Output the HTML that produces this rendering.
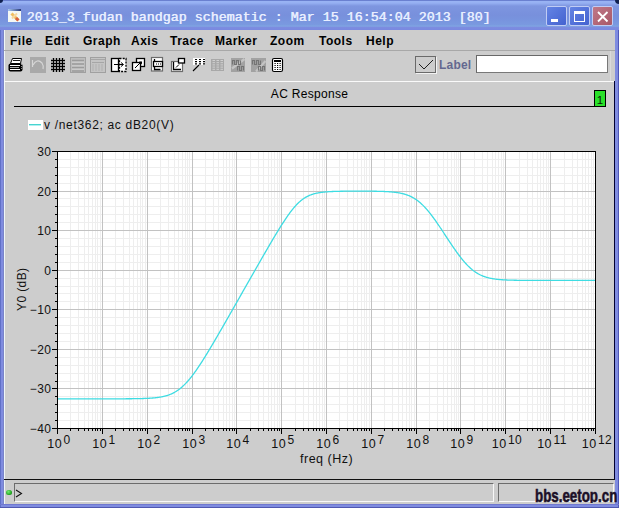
<!DOCTYPE html>
<html><head><meta charset="utf-8"><style>
*{margin:0;padding:0;box-sizing:border-box}
html,body{width:619px;height:508px;overflow:hidden;background:#7f8ce0}
body{position:relative;font-family:"Liberation Sans",sans-serif}
.abs{position:absolute}
#title{left:0;top:0;width:619px;height:30px;background:linear-gradient(#6a80d0 0px,#6a80d0 1px,#9ab4f4 1px,#96b0f2 3px,#7e96e0 6px,#7890dc 15px,#7894de 20px,#7a9ae0 25px,#80a6e2 26px,#7c8ce0 27.5px,#7a88e0 30px)}
#ttext{left:26.5px;top:10px;font-family:"Liberation Mono",monospace;text-shadow:0.5px 0 0 #e8eeff;font-size:13.33px;line-height:16px;color:#e8eeff;white-space:pre}
.tb{top:6px;width:21px;height:20px;border:1px solid #c0ccf4;border-radius:2px}
#client{left:4px;top:30px;width:611px;height:474px;background:#cdcdcd}
.menu{top:34px;font-size:12px;font-weight:bold;line-height:14px;color:#000;white-space:pre;letter-spacing:0.5px}
.yl{position:absolute;left:0;width:51.5px;text-align:right;font-size:12px;line-height:14px;color:#111;letter-spacing:0.5px}
.xl{position:absolute;top:437px;width:60px;text-align:center;font-size:12.5px;line-height:14px;color:#111;white-space:pre;letter-spacing:0.4px}
.xl sup{font-size:12px;vertical-align:0;position:relative;top:-4px;margin-left:1.5px}
</style></head><body>
<div id="title" class="abs"></div>
<div class="abs" style="left:0;top:30px;width:1px;height:478px;background:#6070c8"></div>
<div class="abs" style="left:3px;top:30px;width:1px;height:474px;background:#7a84c8"></div>
<div class="abs" style="left:618px;top:30px;width:1px;height:478px;background:#5058b8"></div>
<div class="abs" style="left:0;top:504px;width:619px;height:1px;background:#7078d0"></div>
<div class="abs" style="left:0;top:507px;width:619px;height:1px;background:#5058b0"></div>
<div class="abs" style="left:0;top:0;width:3px;height:3px;background:#102050;border-bottom-right-radius:3px"></div>
<div class="abs" style="left:615px;top:0;width:4px;height:4px;background:#102050;border-bottom-left-radius:4px"></div>
<!-- icon -->
<svg class="abs" style="left:8px;top:9px" width="14" height="14"><defs><linearGradient id="tg" x1="0" x2="1"><stop offset="0" stop-color="#a8c8f0"/><stop offset="1" stop-color="#2a3a7a"/></linearGradient></defs><rect x="0" y="0" width="13" height="13" fill="#f4f8f4"/><rect x="0" y="0" width="13" height="2" fill="url(#tg)"/><path d="M3.5 4.5L10 11" stroke="#f0b850" stroke-width="3" opacity="0.9"/><path d="M8 9L10.5 11.5" stroke="#d86040" stroke-width="3"/><path d="M9 4.5L4 9.5" stroke="#f8d8a0" stroke-width="2"/></svg>
<div id="ttext" class="abs">2013_3_fudan bandgap schematic : Mar 15 16:54:04 2013 [80]</div>
<div class="abs tb" style="left:546px;background:linear-gradient(135deg,#6484e4,#4462d0)"></div>
<div class="abs" style="left:551px;top:19px;width:7px;height:3px;background:#fff"></div>
<div class="abs tb" style="left:569px;background:linear-gradient(135deg,#6484e4,#4462d0)"></div>
<div class="abs" style="left:574px;top:11px;width:11px;height:11px;border:1px solid #fff;border-top-width:3px"></div>
<div class="abs tb" style="left:592px;background:linear-gradient(135deg,#c07888,#a85868)"></div>
<svg class="abs" style="left:596px;top:10px" width="13" height="13"><path d="M2 2L11.5 11.5M11.5 2L2 11.5" stroke="#fff" stroke-width="1.8"/></svg>
<div id="client" class="abs"></div>
<div class="abs" style="left:4px;top:30px;width:1px;height:474px;background:#eef6f8"></div>
<div class="abs" style="left:4px;top:50px;width:611px;height:1px;background:#a8a8a8"></div>
<div class="abs menu" style="left:10px">File</div>
<div class="abs menu" style="left:45px">Edit</div>
<div class="abs menu" style="left:83px">Graph</div>
<div class="abs menu" style="left:131px">Axis</div>
<div class="abs menu" style="left:170px">Trace</div>
<div class="abs menu" style="left:215px">Marker</div>
<div class="abs menu" style="left:270px">Zoom</div>
<div class="abs menu" style="left:319px">Tools</div>
<div class="abs menu" style="left:366px">Help</div>
<svg class="abs" style="left:0;top:0" width="619" height="80"><path d="M12.5 58.5H21.5L20.5 63.5H10.5Z" fill="#fff" stroke="#000"/>
<path d="M13 60.5H20" stroke="#000" stroke-width="0.9"/>
<rect x="8.5" y="63.5" width="14" height="8" rx="2" fill="#000"/>
<path d="M10 65.5H20M10 69.5H20" stroke="#fff"/>
<path d="M10 67.5H19" stroke="#a8a8a8"/>
<path d="M21 64.5h1M21 66.5h1M21 68.5h1" stroke="#888"/>
<rect x="30" y="57" width="16" height="16" fill="#a9a9a9"/>
<path d="M32.5 60V67M33 65Q37 58 42 63Q44 66 43 69" stroke="#d6d6d6" stroke-width="1.2" fill="none"/>
<rect x="52" y="59" width="12" height="12" fill="#fff"/><path d="M53.5 58V72M56.5 58V72M59.5 58V72M62.5 58V72M51 60.5H65M51 63.5H65M51 66.5H65M51 69.5H65" stroke="#000" stroke-width="1.4"/><path d="M50.5 58H51.5M50.5 72H51.5" stroke="#cdcdcd" stroke-width="0"/>
<rect x="70.5" y="57.5" width="15" height="15" fill="#bdbdbd" stroke="#a0a0a0"/>
<path d="M72 60.5H84M72 64H84M72 67.5H84M72 71H84" stroke="#9c9c9c" stroke-width="1.4"/>
<path d="M72 62.2H84M72 65.8H84M72 69.2H84" stroke="#cfcfcf" stroke-width="1"/>
<rect x="90.5" y="57.5" width="15" height="15" fill="#c4c4c4" stroke="#a0a0a0"/>
<path d="M91 59.5H105M92 62.5H104" stroke="#a6a6a6" stroke-width="1.2"/>
<path d="M93 64V71M96 64V71M99 64V71M102 64V71" stroke="#b0b0b0" stroke-width="1"/>
<rect x="111.5" y="58.5" width="7" height="13" fill="#fff" stroke="#000" stroke-width="1.3"/>
<rect x="119.5" y="58.5" width="6.5" height="13" fill="#fff" stroke="#000" stroke-width="1.3" stroke-dasharray="2 1.2"/>
<path d="M114 64.5H123M121 62.5L123.5 64.5L121 66.5" stroke="#000" stroke-width="1" fill="none"/>
<rect x="136.5" y="58.5" width="8" height="8" fill="#fff" stroke="#000" stroke-width="1.3"/>
<rect x="132.5" y="62.5" width="8" height="8" fill="#fff" stroke="#000" stroke-width="1.3"/>
<path d="M135 68L141 62" stroke="#000" stroke-width="1"/><path d="M139 61.5H142V64.5Z" fill="#000"/>
<rect x="151.5" y="57.5" width="11" height="13.5" fill="#fff" stroke="#6c6c6c" stroke-width="1.2"/>
<path d="M154.5 59V69.5H160.5" stroke="#000" stroke-width="1.3" fill="none"/>
<rect x="153.5" y="61.5" width="9" height="5" fill="#fff" stroke="#000" stroke-width="1.3"/>
<path d="M156 64H157M158 64H159M160 64H161" stroke="#000" stroke-width="1.2"/>
<rect x="171.5" y="61.5" width="11" height="10" fill="#fff" stroke="#6c6c6c" stroke-width="1.2"/>
<path d="M173.5 62V69.5H181" stroke="#000" stroke-width="1.3" fill="none"/>
<path d="M176 67.5L179 64.5" stroke="#000" stroke-width="1"/>
<rect x="178.5" y="58.5" width="6" height="4.5" fill="#fff" stroke="#000" stroke-width="1.3"/>
<rect x="193" y="58" width="12" height="7" fill="#fff"/>
<path d="M195 59.5h2M195 61.7h2M195 63.8h2M199 59.5h2M199 61.7h2M199 63.8h2M203 59.5h2M203 61.7h2M203 63.8h2" stroke="#000" stroke-width="1.2"/>
<path d="M199 65L193 71" stroke="#000" stroke-width="1.1"/>
<rect x="211" y="59" width="13" height="12" fill="#a8a8a8"/>
<path d="M212.5 60.5h2.5M212.5 62.7h2.5M212.5 64.9h2.5M212.5 67.1h2.5M212.5 69.3h2.5M216.5 60.5h2.5M216.5 62.7h2.5M216.5 64.9h2.5M216.5 67.1h2.5M216.5 69.3h2.5M220.5 60.5h2.5M220.5 62.7h2.5M220.5 64.9h2.5M220.5 67.1h2.5M220.5 69.3h2.5" stroke="#d0d0d0" stroke-width="1"/>
<rect x="231" y="58" width="14" height="14" fill="#a2a2a2"/>
<path d="M232 68.5L244.5 59" stroke="#c4c4c4" stroke-width="2.2"/>
<path d="M232.5 64.5V60.5H234.5V64.5H236.5V60.5H238.5V64.5H240.5V60.5" stroke="#747474" stroke-width="1.1" fill="none"/>
<path d="M237.5 70.5V66.5H239.5V70.5H241.5V66.5H243.5V70.5" stroke="#747474" stroke-width="1.1" fill="none"/>
<rect x="251" y="58" width="15" height="14" fill="#a2a2a2"/>
<path d="M256 71.5L265.5 61" stroke="#c4c4c4" stroke-width="2.2"/>
<path d="M252.5 64.5V60.5H254.5V64.5H256.5V60.5H258.5V64.5H260.5V60.5" stroke="#747474" stroke-width="1.1" fill="none"/>
<path d="M258.5 70.5V66.5H260.5V70.5H262.5V66.5H264.5V70.5" stroke="#747474" stroke-width="1.1" fill="none"/>
<rect x="272.5" y="58.5" width="10" height="13" rx="1.5" fill="#fff" stroke="#000" stroke-width="1.15"/>
<rect x="274" y="60" width="7" height="2" fill="#000"/>
<path d="M274.5 63.5h1.2M274.5 65.5h1.2M274.5 67.5h1.2M274.5 69.5h1.2M277 63.5h1.2M277 65.5h1.2M277 67.5h1.2M277 69.5h1.2M279.5 63.5h1.2M279.5 65.5h1.2M279.5 67.5h1.2M279.5 69.5h1.2" stroke="#000" stroke-width="1.2"/></svg>
<!-- label -->
<div class="abs" style="left:415px;top:56px;width:21px;height:17px;border:1px solid #6a6a6a;box-shadow:1px 1px 0 #f2f2f2"></div>
<svg class="abs" style="left:415px;top:56px" width="21" height="17"><path d="M4 8 L9 13 L18 4" stroke="#202020" stroke-width="1" fill="none"/></svg>
<div class="abs" style="left:439px;top:58px;font-size:12px;font-weight:bold;line-height:14px;color:#646890;letter-spacing:0.2px">Label</div>
<div class="abs" style="left:476px;top:55px;width:132px;height:18px;background:#fff;border:1px solid #686868;border-right-color:#787878;border-bottom-color:#787878"></div><div class="abs" style="left:610px;top:51px;width:1px;height:30px;background:#dadada"></div>
<!-- panel -->
<div class="abs" style="left:4px;top:81px;width:611px;height:1px;background:#fafafa"></div>
<div class="abs" style="left:614px;top:81px;width:1px;height:399px;background:#000030"></div>
<div class="abs" style="left:4px;top:479px;width:611px;height:1px;background:#101010"></div>
<div class="abs" style="left:0;top:87px;width:619px;text-align:center;font-size:12px;line-height:14px;color:#000;letter-spacing:0.3px">AC Response</div>
<div class="abs" style="left:14px;top:106px;width:580px;height:1px;background:#000"></div>
<div class="abs" style="left:594px;top:90px;width:12px;height:17px;background:#2ae02a;border:1px solid #000;font-size:11.5px;line-height:16px;padding-top:1px;text-align:center;color:#082008">1</div>
<!-- legend -->
<div class="abs" style="left:28px;top:120px;width:15px;height:10px;background:#fff"></div>
<div class="abs" style="left:29px;top:124px;width:12px;height:1px;background:#48d4d0"></div><div class="abs" style="left:29px;top:125px;width:12px;height:1px;background:#b0f0f0"></div>
<div class="abs" style="left:44px;top:118px;font-size:12px;line-height:14px;color:#111;white-space:pre;letter-spacing:0.68px">v /net362; ac dB20(V)</div>
<svg class="abs" style="left:0;top:0" width="619" height="508" shape-rendering="crispEdges">
<rect x="57.5" y="151.5" width="538" height="277" fill="#fff"/>
<path d="M70.5 152V428M78.5 152V428M84.5 152V428M88.5 152V428M92.5 152V428M95.5 152V428M97.5 152V428M100.5 152V428M115.5 152V428M123.5 152V428M129.5 152V428M133.5 152V428M137.5 152V428M140.5 152V428M142.5 152V428M145.5 152V428M160.5 152V428M168.5 152V428M174.5 152V428M178.5 152V428M182.5 152V428M185.5 152V428M187.5 152V428M189.5 152V428M205.5 152V428M213.5 152V428M218.5 152V428M223.5 152V428M226.5 152V428M229.5 152V428M232.5 152V428M234.5 152V428M250.5 152V428M258.5 152V428M263.5 152V428M268.5 152V428M271.5 152V428M274.5 152V428M277.5 152V428M279.5 152V428M295.5 152V428M303.5 152V428M308.5 152V428M313.5 152V428M316.5 152V428M319.5 152V428M322.5 152V428M324.5 152V428M339.5 152V428M347.5 152V428M353.5 152V428M357.5 152V428M361.5 152V428M364.5 152V428M366.5 152V428M369.5 152V428M384.5 152V428M392.5 152V428M398.5 152V428M402.5 152V428M406.5 152V428M409.5 152V428M411.5 152V428M414.5 152V428M429.5 152V428M437.5 152V428M443.5 152V428M447.5 152V428M451.5 152V428M454.5 152V428M456.5 152V428M458.5 152V428M474.5 152V428M482.5 152V428M487.5 152V428M492.5 152V428M495.5 152V428M498.5 152V428M501.5 152V428M503.5 152V428M519.5 152V428M527.5 152V428M532.5 152V428M537.5 152V428M540.5 152V428M543.5 152V428M546.5 152V428M548.5 152V428M564.5 152V428M572.5 152V428M577.5 152V428M582.5 152V428M585.5 152V428M588.5 152V428M591.5 152V428M593.5 152V428M58 420.5H595M58 412.5H595M58 404.5H595M58 396.5H595M58 381.5H595M58 373.5H595M58 365.5H595M58 357.5H595M58 341.5H595M58 333.5H595M58 325.5H595M58 317.5H595M58 301.5H595M58 293.5H595M58 286.5H595M58 278.5H595M58 262.5H595M58 254.5H595M58 246.5H595M58 238.5H595M58 222.5H595M58 214.5H595M58 206.5H595M58 198.5H595M58 183.5H595M58 175.5H595M58 167.5H595M58 159.5H595" stroke="#eeeeee" stroke-width="1" fill="none"/>
<path d="M102.5 152V428M147.5 152V428M192.5 152V428M236.5 152V428M281.5 152V428M326.5 152V428M371.5 152V428M416.5 152V428M460.5 152V428M505.5 152V428M550.5 152V428M58 388.5H595M58 349.5H595M58 309.5H595M58 270.5H595M58 230.5H595M58 191.5H595" stroke="#c2c2c2" stroke-width="1" fill="none"/>
<path d="M57.00 398.83 L57.50 398.83 L58.00 398.83 L58.50 398.83 L59.00 398.83 L59.50 398.83 L60.00 398.83 L60.50 398.83 L61.00 398.83 L61.50 398.83 L62.00 398.83 L62.50 398.83 L63.00 398.83 L63.50 398.83 L64.00 398.83 L64.50 398.83 L65.00 398.83 L65.50 398.83 L66.00 398.83 L66.50 398.83 L67.00 398.83 L67.50 398.83 L68.00 398.83 L68.50 398.83 L69.00 398.83 L69.50 398.83 L70.00 398.83 L70.50 398.83 L71.00 398.83 L71.50 398.83 L72.00 398.83 L72.50 398.83 L73.00 398.83 L73.50 398.83 L74.00 398.83 L74.50 398.83 L75.00 398.83 L75.50 398.83 L76.00 398.83 L76.50 398.83 L77.00 398.83 L77.50 398.83 L78.00 398.83 L78.50 398.83 L79.00 398.83 L79.50 398.83 L80.00 398.83 L80.50 398.83 L81.00 398.83 L81.50 398.83 L82.00 398.83 L82.50 398.83 L83.00 398.83 L83.50 398.83 L84.00 398.83 L84.50 398.83 L85.00 398.83 L85.50 398.83 L86.00 398.83 L86.50 398.83 L87.00 398.83 L87.50 398.83 L88.00 398.83 L88.50 398.83 L89.00 398.83 L89.50 398.83 L90.00 398.83 L90.50 398.83 L91.00 398.83 L91.50 398.83 L92.00 398.83 L92.50 398.83 L93.00 398.83 L93.50 398.83 L94.00 398.83 L94.50 398.83 L95.00 398.83 L95.50 398.83 L96.00 398.83 L96.50 398.83 L97.00 398.83 L97.50 398.83 L98.00 398.82 L98.50 398.82 L99.00 398.82 L99.50 398.82 L100.00 398.82 L100.50 398.82 L101.00 398.82 L101.50 398.82 L102.00 398.82 L102.50 398.82 L103.00 398.82 L103.50 398.82 L104.00 398.82 L104.50 398.82 L105.00 398.82 L105.50 398.82 L106.00 398.82 L106.50 398.82 L107.00 398.82 L107.50 398.82 L108.00 398.82 L108.50 398.82 L109.00 398.82 L109.50 398.82 L110.00 398.82 L110.50 398.82 L111.00 398.82 L111.50 398.82 L112.00 398.82 L112.50 398.81 L113.00 398.81 L113.50 398.81 L114.00 398.81 L114.50 398.81 L115.00 398.81 L115.50 398.81 L116.00 398.81 L116.50 398.81 L117.00 398.81 L117.50 398.81 L118.00 398.80 L118.50 398.80 L119.00 398.80 L119.50 398.80 L120.00 398.80 L120.50 398.80 L121.00 398.80 L121.50 398.79 L122.00 398.79 L122.50 398.79 L123.00 398.79 L123.50 398.79 L124.00 398.78 L124.50 398.78 L125.00 398.78 L125.50 398.78 L126.00 398.77 L126.50 398.77 L127.00 398.77 L127.50 398.76 L128.00 398.76 L128.50 398.76 L129.00 398.75 L129.50 398.75 L130.00 398.75 L130.50 398.74 L131.00 398.74 L131.50 398.73 L132.00 398.73 L132.50 398.72 L133.00 398.72 L133.50 398.71 L134.00 398.71 L134.50 398.70 L135.00 398.69 L135.50 398.68 L136.00 398.68 L136.50 398.67 L137.00 398.66 L137.50 398.65 L138.00 398.64 L138.50 398.63 L139.00 398.62 L139.50 398.61 L140.00 398.60 L140.50 398.59 L141.00 398.58 L141.50 398.56 L142.00 398.55 L142.50 398.54 L143.00 398.52 L143.50 398.50 L144.00 398.49 L144.50 398.47 L145.00 398.45 L145.50 398.43 L146.00 398.41 L146.50 398.39 L147.00 398.37 L147.50 398.34 L148.00 398.32 L148.50 398.29 L149.00 398.26 L149.50 398.23 L150.00 398.20 L150.50 398.17 L151.00 398.14 L151.50 398.10 L152.00 398.06 L152.50 398.02 L153.00 397.98 L153.50 397.94 L154.00 397.89 L154.50 397.85 L155.00 397.80 L155.50 397.74 L156.00 397.69 L156.50 397.63 L157.00 397.57 L157.50 397.50 L158.00 397.44 L158.50 397.37 L159.00 397.29 L159.50 397.22 L160.00 397.14 L160.50 397.05 L161.00 396.96 L161.50 396.87 L162.00 396.77 L162.50 396.67 L163.00 396.56 L163.50 396.45 L164.00 396.34 L164.50 396.21 L165.00 396.09 L165.50 395.95 L166.00 395.81 L166.50 395.67 L167.00 395.52 L167.50 395.36 L168.00 395.20 L168.50 395.02 L169.00 394.85 L169.50 394.66 L170.00 394.47 L170.50 394.26 L171.00 394.05 L171.50 393.84 L172.00 393.61 L172.50 393.37 L173.00 393.13 L173.50 392.87 L174.00 392.61 L174.50 392.34 L175.00 392.06 L175.50 391.76 L176.00 391.46 L176.50 391.15 L177.00 390.82 L177.50 390.49 L178.00 390.15 L178.50 389.79 L179.00 389.42 L179.50 389.05 L180.00 388.66 L180.50 388.26 L181.00 387.85 L181.50 387.42 L182.00 386.99 L182.50 386.55 L183.00 386.09 L183.50 385.62 L184.00 385.14 L184.50 384.65 L185.00 384.15 L185.50 383.64 L186.00 383.12 L186.50 382.58 L187.00 382.04 L187.50 381.48 L188.00 380.91 L188.50 380.34 L189.00 379.75 L189.50 379.15 L190.00 378.55 L190.50 377.93 L191.00 377.31 L191.50 376.67 L192.00 376.03 L192.50 375.37 L193.00 374.71 L193.50 374.04 L194.00 373.36 L194.50 372.68 L195.00 371.98 L195.50 371.28 L196.00 370.57 L196.50 369.86 L197.00 369.14 L197.50 368.41 L198.00 367.67 L198.50 366.93 L199.00 366.18 L199.50 365.43 L200.00 364.67 L200.50 363.91 L201.00 363.14 L201.50 362.36 L202.00 361.58 L202.50 360.80 L203.00 360.01 L203.50 359.22 L204.00 358.42 L204.50 357.62 L205.00 356.82 L205.50 356.01 L206.00 355.20 L206.50 354.38 L207.00 353.57 L207.50 352.75 L208.00 351.92 L208.50 351.10 L209.00 350.27 L209.50 349.44 L210.00 348.60 L210.50 347.77 L211.00 346.93 L211.50 346.09 L212.00 345.24 L212.50 344.40 L213.00 343.55 L213.50 342.70 L214.00 341.86 L214.50 341.00 L215.00 340.15 L215.50 339.30 L216.00 338.44 L216.50 337.58 L217.00 336.73 L217.50 335.87 L218.00 335.01 L218.50 334.15 L219.00 333.28 L219.50 332.42 L220.00 331.55 L220.50 330.69 L221.00 329.82 L221.50 328.96 L222.00 328.09 L222.50 327.22 L223.00 326.35 L223.50 325.48 L224.00 324.61 L224.50 323.74 L225.00 322.87 L225.50 322.00 L226.00 321.12 L226.50 320.25 L227.00 319.38 L227.50 318.50 L228.00 317.63 L228.50 316.76 L229.00 315.88 L229.50 315.01 L230.00 314.13 L230.50 313.25 L231.00 312.38 L231.50 311.50 L232.00 310.62 L232.50 309.75 L233.00 308.87 L233.50 307.99 L234.00 307.12 L234.50 306.24 L235.00 305.36 L235.50 304.48 L236.00 303.60 L236.50 302.72 L237.00 301.85 L237.50 300.97 L238.00 300.09 L238.50 299.21 L239.00 298.33 L239.50 297.45 L240.00 296.57 L240.50 295.69 L241.00 294.82 L241.50 293.94 L242.00 293.06 L242.50 292.18 L243.00 291.30 L243.50 290.42 L244.00 289.54 L244.50 288.66 L245.00 287.78 L245.50 286.90 L246.00 286.02 L246.50 285.15 L247.00 284.27 L247.50 283.39 L248.00 282.51 L248.50 281.63 L249.00 280.75 L249.50 279.87 L250.00 279.00 L250.50 278.12 L251.00 277.24 L251.50 276.36 L252.00 275.48 L252.50 274.61 L253.00 273.73 L253.50 272.85 L254.00 271.98 L254.50 271.10 L255.00 270.22 L255.50 269.35 L256.00 268.47 L256.50 267.60 L257.00 266.72 L257.50 265.85 L258.00 264.98 L258.50 264.10 L259.00 263.23 L259.50 262.36 L260.00 261.48 L260.50 260.61 L261.00 259.74 L261.50 258.87 L262.00 258.00 L262.50 257.13 L263.00 256.26 L263.50 255.39 L264.00 254.53 L264.50 253.66 L265.00 252.80 L265.50 251.93 L266.00 251.07 L266.50 250.20 L267.00 249.34 L267.50 248.48 L268.00 247.62 L268.50 246.76 L269.00 245.91 L269.50 245.05 L270.00 244.20 L270.50 243.34 L271.00 242.49 L271.50 241.64 L272.00 240.80 L272.50 239.95 L273.00 239.11 L273.50 238.26 L274.00 237.42 L274.50 236.59 L275.00 235.75 L275.50 234.92 L276.00 234.09 L276.50 233.26 L277.00 232.44 L277.50 231.62 L278.00 230.80 L278.50 229.98 L279.00 229.17 L279.50 228.36 L280.00 227.56 L280.50 226.76 L281.00 225.96 L281.50 225.17 L282.00 224.39 L282.50 223.61 L283.00 222.83 L283.50 222.06 L284.00 221.29 L284.50 220.53 L285.00 219.78 L285.50 219.03 L286.00 218.29 L286.50 217.56 L287.00 216.83 L287.50 216.11 L288.00 215.40 L288.50 214.70 L289.00 214.01 L289.50 213.32 L290.00 212.65 L290.50 211.98 L291.00 211.32 L291.50 210.67 L292.00 210.04 L292.50 209.41 L293.00 208.79 L293.50 208.19 L294.00 207.60 L294.50 207.02 L295.00 206.45 L295.50 205.89 L296.00 205.34 L296.50 204.81 L297.00 204.29 L297.50 203.78 L298.00 203.29 L298.50 202.81 L299.00 202.34 L299.50 201.88 L300.00 201.44 L300.50 201.01 L301.00 200.60 L301.50 200.20 L302.00 199.81 L302.50 199.43 L303.00 199.07 L303.50 198.72 L304.00 198.38 L304.50 198.05 L305.00 197.74 L305.50 197.43 L306.00 197.14 L306.50 196.86 L307.00 196.60 L307.50 196.34 L308.00 196.09 L308.50 195.86 L309.00 195.63 L309.50 195.41 L310.00 195.21 L310.50 195.01 L311.00 194.82 L311.50 194.64 L312.00 194.47 L312.50 194.30 L313.00 194.14 L313.50 193.99 L314.00 193.85 L314.50 193.71 L315.00 193.59 L315.50 193.46 L316.00 193.34 L316.50 193.23 L317.00 193.12 L317.50 193.02 L318.00 192.93 L318.50 192.83 L319.00 192.75 L319.50 192.66 L320.00 192.59 L320.50 192.51 L321.00 192.44 L321.50 192.37 L322.00 192.31 L322.50 192.24 L323.00 192.19 L323.50 192.13 L324.00 192.08 L324.50 192.03 L325.00 191.98 L325.50 191.94 L326.00 191.89 L326.50 191.85 L327.00 191.81 L327.50 191.78 L328.00 191.74 L328.50 191.71 L329.00 191.68 L329.50 191.65 L330.00 191.62 L330.50 191.59 L331.00 191.57 L331.50 191.54 L332.00 191.52 L332.50 191.50 L333.00 191.48 L333.50 191.46 L334.00 191.44 L334.50 191.42 L335.00 191.40 L335.50 191.39 L336.00 191.37 L336.50 191.36 L337.00 191.34 L337.50 191.33 L338.00 191.32 L338.50 191.31 L339.00 191.30 L339.50 191.29 L340.00 191.28 L340.50 191.27 L341.00 191.26 L341.50 191.25 L342.00 191.24 L342.50 191.23 L343.00 191.23 L343.50 191.22 L344.00 191.21 L344.50 191.21 L345.00 191.20 L345.50 191.20 L346.00 191.19 L346.50 191.19 L347.00 191.18 L347.50 191.18 L348.00 191.17 L348.50 191.17 L349.00 191.17 L349.50 191.16 L350.00 191.16 L350.50 191.16 L351.00 191.15 L351.50 191.15 L352.00 191.15 L352.50 191.15 L353.00 191.15 L353.50 191.14 L354.00 191.14 L354.50 191.14 L355.00 191.14 L355.50 191.14 L356.00 191.14 L356.50 191.14 L357.00 191.14 L357.50 191.14 L358.00 191.14 L358.50 191.14 L359.00 191.14 L359.50 191.14 L360.00 191.14 L360.50 191.14 L361.00 191.14 L361.50 191.14 L362.00 191.14 L362.50 191.14 L363.00 191.14 L363.50 191.14 L364.00 191.15 L364.50 191.15 L365.00 191.15 L365.50 191.15 L366.00 191.16 L366.50 191.16 L367.00 191.16 L367.50 191.16 L368.00 191.17 L368.50 191.17 L369.00 191.18 L369.50 191.18 L370.00 191.18 L370.50 191.19 L371.00 191.19 L371.50 191.20 L372.00 191.20 L372.50 191.21 L373.00 191.22 L373.50 191.22 L374.00 191.23 L374.50 191.24 L375.00 191.24 L375.50 191.25 L376.00 191.26 L376.50 191.27 L377.00 191.28 L377.50 191.29 L378.00 191.30 L378.50 191.31 L379.00 191.32 L379.50 191.34 L380.00 191.35 L380.50 191.36 L381.00 191.38 L381.50 191.39 L382.00 191.41 L382.50 191.43 L383.00 191.45 L383.50 191.46 L384.00 191.48 L384.50 191.51 L385.00 191.53 L385.50 191.55 L386.00 191.58 L386.50 191.60 L387.00 191.63 L387.50 191.66 L388.00 191.69 L388.50 191.72 L389.00 191.75 L389.50 191.78 L390.00 191.82 L390.50 191.86 L391.00 191.90 L391.50 191.94 L392.00 191.99 L392.50 192.03 L393.00 192.08 L393.50 192.13 L394.00 192.19 L394.50 192.24 L395.00 192.30 L395.50 192.36 L396.00 192.43 L396.50 192.50 L397.00 192.57 L397.50 192.64 L398.00 192.72 L398.50 192.80 L399.00 192.89 L399.50 192.98 L400.00 193.07 L400.50 193.17 L401.00 193.28 L401.50 193.38 L402.00 193.50 L402.50 193.62 L403.00 193.74 L403.50 193.87 L404.00 194.00 L404.50 194.15 L405.00 194.29 L405.50 194.45 L406.00 194.61 L406.50 194.77 L407.00 194.95 L407.50 195.13 L408.00 195.32 L408.50 195.52 L409.00 195.72 L409.50 195.93 L410.00 196.15 L410.50 196.38 L411.00 196.62 L411.50 196.87 L412.00 197.12 L412.50 197.39 L413.00 197.67 L413.50 197.95 L414.00 198.25 L414.50 198.55 L415.00 198.87 L415.50 199.19 L416.00 199.53 L416.50 199.88 L417.00 200.23 L417.50 200.60 L418.00 200.98 L418.50 201.37 L419.00 201.77 L419.50 202.19 L420.00 202.61 L420.50 203.05 L421.00 203.49 L421.50 203.95 L422.00 204.42 L422.50 204.89 L423.00 205.38 L423.50 205.88 L424.00 206.40 L424.50 206.92 L425.00 207.45 L425.50 207.99 L426.00 208.55 L426.50 209.11 L427.00 209.68 L427.50 210.26 L428.00 210.85 L428.50 211.45 L429.00 212.06 L429.50 212.68 L430.00 213.31 L430.50 213.94 L431.00 214.59 L431.50 215.24 L432.00 215.90 L432.50 216.56 L433.00 217.24 L433.50 217.92 L434.00 218.60 L434.50 219.29 L435.00 219.99 L435.50 220.70 L436.00 221.41 L436.50 222.12 L437.00 222.84 L437.50 223.56 L438.00 224.29 L438.50 225.02 L439.00 225.76 L439.50 226.50 L440.00 227.24 L440.50 227.99 L441.00 228.73 L441.50 229.48 L442.00 230.24 L442.50 230.99 L443.00 231.75 L443.50 232.51 L444.00 233.26 L444.50 234.02 L445.00 234.78 L445.50 235.54 L446.00 236.31 L446.50 237.07 L447.00 237.83 L447.50 238.58 L448.00 239.34 L448.50 240.10 L449.00 240.86 L449.50 241.61 L450.00 242.36 L450.50 243.11 L451.00 243.86 L451.50 244.60 L452.00 245.34 L452.50 246.08 L453.00 246.81 L453.50 247.54 L454.00 248.27 L454.50 248.99 L455.00 249.71 L455.50 250.42 L456.00 251.13 L456.50 251.83 L457.00 252.53 L457.50 253.22 L458.00 253.90 L458.50 254.57 L459.00 255.24 L459.50 255.91 L460.00 256.56 L460.50 257.21 L461.00 257.85 L461.50 258.48 L462.00 259.10 L462.50 259.72 L463.00 260.32 L463.50 260.92 L464.00 261.51 L464.50 262.09 L465.00 262.65 L465.50 263.21 L466.00 263.76 L466.50 264.30 L467.00 264.83 L467.50 265.34 L468.00 265.85 L468.50 266.35 L469.00 266.83 L469.50 267.30 L470.00 267.77 L470.50 268.22 L471.00 268.66 L471.50 269.09 L472.00 269.51 L472.50 269.92 L473.00 270.31 L473.50 270.70 L474.00 271.07 L474.50 271.44 L475.00 271.79 L475.50 272.13 L476.00 272.46 L476.50 272.78 L477.00 273.09 L477.50 273.40 L478.00 273.69 L478.50 273.97 L479.00 274.24 L479.50 274.50 L480.00 274.75 L480.50 275.00 L481.00 275.23 L481.50 275.46 L482.00 275.67 L482.50 275.88 L483.00 276.08 L483.50 276.28 L484.00 276.46 L484.50 276.64 L485.00 276.81 L485.50 276.97 L486.00 277.13 L486.50 277.28 L487.00 277.43 L487.50 277.57 L488.00 277.70 L488.50 277.82 L489.00 277.95 L489.50 278.06 L490.00 278.17 L490.50 278.28 L491.00 278.38 L491.50 278.48 L492.00 278.57 L492.50 278.66 L493.00 278.74 L493.50 278.82 L494.00 278.90 L494.50 278.97 L495.00 279.04 L495.50 279.11 L496.00 279.17 L496.50 279.24 L497.00 279.29 L497.50 279.35 L498.00 279.40 L498.50 279.45 L499.00 279.50 L499.50 279.54 L500.00 279.59 L500.50 279.63 L501.00 279.67 L501.50 279.71 L502.00 279.74 L502.50 279.77 L503.00 279.81 L503.50 279.84 L504.00 279.87 L504.50 279.89 L505.00 279.92 L505.50 279.95 L506.00 279.97 L506.50 279.99 L507.00 280.01 L507.50 280.03 L508.00 280.05 L508.50 280.07 L509.00 280.09 L509.50 280.11 L510.00 280.12 L510.50 280.14 L511.00 280.15 L511.50 280.17 L512.00 280.18 L512.50 280.19 L513.00 280.20 L513.50 280.22 L514.00 280.23 L514.50 280.24 L515.00 280.25 L515.50 280.26 L516.00 280.26 L516.50 280.27 L517.00 280.28 L517.50 280.29 L518.00 280.29 L518.50 280.30 L519.00 280.31 L519.50 280.31 L520.00 280.32 L520.50 280.33 L521.00 280.33 L521.50 280.34 L522.00 280.34 L522.50 280.34 L523.00 280.35 L523.50 280.35 L524.00 280.36 L524.50 280.36 L525.00 280.36 L525.50 280.37 L526.00 280.37 L526.50 280.37 L527.00 280.38 L527.50 280.38 L528.00 280.38 L528.50 280.38 L529.00 280.39 L529.50 280.39 L530.00 280.39 L530.50 280.39 L531.00 280.39 L531.50 280.40 L532.00 280.40 L532.50 280.40 L533.00 280.40 L533.50 280.40 L534.00 280.40 L534.50 280.41 L535.00 280.41 L535.50 280.41 L536.00 280.41 L536.50 280.41 L537.00 280.41 L537.50 280.41 L538.00 280.41 L538.50 280.41 L539.00 280.41 L539.50 280.42 L540.00 280.42 L540.50 280.42 L541.00 280.42 L541.50 280.42 L542.00 280.42 L542.50 280.42 L543.00 280.42 L543.50 280.42 L544.00 280.42 L544.50 280.42 L545.00 280.42 L545.50 280.42 L546.00 280.42 L546.50 280.42 L547.00 280.42 L547.50 280.42 L548.00 280.42 L548.50 280.42 L549.00 280.42 L549.50 280.42 L550.00 280.43 L550.50 280.43 L551.00 280.43 L551.50 280.43 L552.00 280.43 L552.50 280.43 L553.00 280.43 L553.50 280.43 L554.00 280.43 L554.50 280.43 L555.00 280.43 L555.50 280.43 L556.00 280.43 L556.50 280.43 L557.00 280.43 L557.50 280.43 L558.00 280.43 L558.50 280.43 L559.00 280.43 L559.50 280.43 L560.00 280.43 L560.50 280.43 L561.00 280.43 L561.50 280.43 L562.00 280.43 L562.50 280.43 L563.00 280.43 L563.50 280.43 L564.00 280.43 L564.50 280.43 L565.00 280.43 L565.50 280.43 L566.00 280.43 L566.50 280.43 L567.00 280.43 L567.50 280.43 L568.00 280.43 L568.50 280.43 L569.00 280.43 L569.50 280.43 L570.00 280.43 L570.50 280.43 L571.00 280.43 L571.50 280.43 L572.00 280.43 L572.50 280.43 L573.00 280.43 L573.50 280.43 L574.00 280.43 L574.50 280.43 L575.00 280.43 L575.50 280.43 L576.00 280.43 L576.50 280.43 L577.00 280.43 L577.50 280.43 L578.00 280.43 L578.50 280.43 L579.00 280.43 L579.50 280.43 L580.00 280.43 L580.50 280.43 L581.00 280.43 L581.50 280.43 L582.00 280.43 L582.50 280.43 L583.00 280.43 L583.50 280.43 L584.00 280.43 L584.50 280.43 L585.00 280.43 L585.50 280.43 L586.00 280.43 L586.50 280.43 L587.00 280.43 L587.50 280.43 L588.00 280.43 L588.50 280.43 L589.00 280.43 L589.50 280.43 L590.00 280.43 L590.50 280.43 L591.00 280.43 L591.50 280.43 L592.00 280.43 L592.50 280.43 L593.00 280.43 L593.50 280.43 L594.00 280.43 L594.50 280.43 L595.00 280.43" stroke="#3edce2" stroke-width="1.3" fill="none" shape-rendering="auto"/>
<path d="M57.5 151V429M57 151.5H596M595.5 151V429M57 428.5H596M52 428.5H57M55 420.5H57M55 412.5H57M55 404.5H57M55 396.5H57M52 388.5H57M55 381.5H57M55 373.5H57M55 365.5H57M55 357.5H57M52 349.5H57M55 341.5H57M55 333.5H57M55 325.5H57M55 317.5H57M52 309.5H57M55 301.5H57M55 293.5H57M55 286.5H57M55 278.5H57M52 270.5H57M55 262.5H57M55 254.5H57M55 246.5H57M55 238.5H57M52 230.5H57M55 222.5H57M55 214.5H57M55 206.5H57M55 198.5H57M52 191.5H57M55 183.5H57M55 175.5H57M55 167.5H57M55 159.5H57M52 151.5H57M57.5 429V434M102.5 429V434M147.5 429V434M192.5 429V434M236.5 429V434M281.5 429V434M326.5 429V434M371.5 429V434M416.5 429V434M460.5 429V434M505.5 429V434M550.5 429V434M595.5 429V434M70.5 429V431M78.5 429V431M84.5 429V431M88.5 429V431M92.5 429V431M95.5 429V431M97.5 429V431M100.5 429V431M115.5 429V431M123.5 429V431M129.5 429V431M133.5 429V431M137.5 429V431M140.5 429V431M142.5 429V431M145.5 429V431M160.5 429V431M168.5 429V431M174.5 429V431M178.5 429V431M182.5 429V431M185.5 429V431M187.5 429V431M189.5 429V431M205.5 429V431M213.5 429V431M218.5 429V431M223.5 429V431M226.5 429V431M229.5 429V431M232.5 429V431M234.5 429V431M250.5 429V431M258.5 429V431M263.5 429V431M268.5 429V431M271.5 429V431M274.5 429V431M277.5 429V431M279.5 429V431M295.5 429V431M303.5 429V431M308.5 429V431M313.5 429V431M316.5 429V431M319.5 429V431M322.5 429V431M324.5 429V431M339.5 429V431M347.5 429V431M353.5 429V431M357.5 429V431M361.5 429V431M364.5 429V431M366.5 429V431M369.5 429V431M384.5 429V431M392.5 429V431M398.5 429V431M402.5 429V431M406.5 429V431M409.5 429V431M411.5 429V431M414.5 429V431M429.5 429V431M437.5 429V431M443.5 429V431M447.5 429V431M451.5 429V431M454.5 429V431M456.5 429V431M458.5 429V431M474.5 429V431M482.5 429V431M487.5 429V431M492.5 429V431M495.5 429V431M498.5 429V431M501.5 429V431M503.5 429V431M519.5 429V431M527.5 429V431M532.5 429V431M537.5 429V431M540.5 429V431M543.5 429V431M546.5 429V431M548.5 429V431M564.5 429V431M572.5 429V431M577.5 429V431M582.5 429V431M585.5 429V431M588.5 429V431M591.5 429V431M593.5 429V431" stroke="#000" stroke-width="1" fill="none"/>
</svg>
<div class="yl" style="top:422px">&minus;40</div><div class="yl" style="top:382px">&minus;30</div><div class="yl" style="top:343px">&minus;20</div><div class="yl" style="top:303px">&minus;10</div><div class="yl" style="top:264px">0</div><div class="yl" style="top:224px">10</div><div class="yl" style="top:185px">20</div><div class="yl" style="top:145px">30</div>
<div class="xl" style="left:29px">10<sup>0</sup></div><div class="xl" style="left:74px">10<sup>1</sup></div><div class="xl" style="left:119px">10<sup>2</sup></div><div class="xl" style="left:164px">10<sup>3</sup></div><div class="xl" style="left:208px">10<sup>4</sup></div><div class="xl" style="left:253px">10<sup>5</sup></div><div class="xl" style="left:298px">10<sup>6</sup></div><div class="xl" style="left:343px">10<sup>7</sup></div><div class="xl" style="left:388px">10<sup>8</sup></div><div class="xl" style="left:432px">10<sup>9</sup></div><div class="xl" style="left:477px">10<sup>10</sup></div><div class="xl" style="left:522px">10<sup>11</sup></div><div class="xl" style="left:567px">10<sup>12</sup></div>
<div class="abs" style="left:16px;top:311px;transform-origin:0 0;transform:rotate(-90deg);font-size:12px;line-height:12px;color:#111;white-space:pre;letter-spacing:0.4px">Y0 (dB)</div>
<div class="abs" style="left:300px;top:452px;font-size:12.5px;line-height:14px;color:#111;white-space:pre;letter-spacing:0.5px">freq (Hz)</div>
<!-- status -->
<div class="abs" style="left:6px;top:489.5px;width:5.5px;height:5.5px;border-radius:50%;background:radial-gradient(circle at 40% 35%,#70f070,#109010 80%)"></div>
<div class="abs" style="left:14px;top:483px;width:480px;height:19px;border:1px solid #6c6c6c;border-right-color:#f8f8f8;border-bottom-color:#f8f8f8"></div>
<svg class="abs" style="left:0;top:480px" width="30" height="24"><path d="M16 10L21.5 13.5L16 17" stroke="#111" stroke-width="1.1" fill="none"/></svg>
<div class="abs" style="left:498px;top:483px;width:116px;height:19px;border:1px solid #6c6c6c;border-right-color:#f8f8f8;border-bottom-color:#f8f8f8"></div>
<div class="abs" style="left:520px;top:484px;width:99px;height:19px;overflow:hidden"><div class="abs" style="left:14.5px;top:0.6px;font-size:17px;font-weight:bold;line-height:20px;color:#1c1028;-webkit-text-stroke:0.5px #1c1028;transform-origin:0 0;transform:scale(0.785,1.13);white-space:pre">bbs.eetop.cn</div></div>
</body></html>
